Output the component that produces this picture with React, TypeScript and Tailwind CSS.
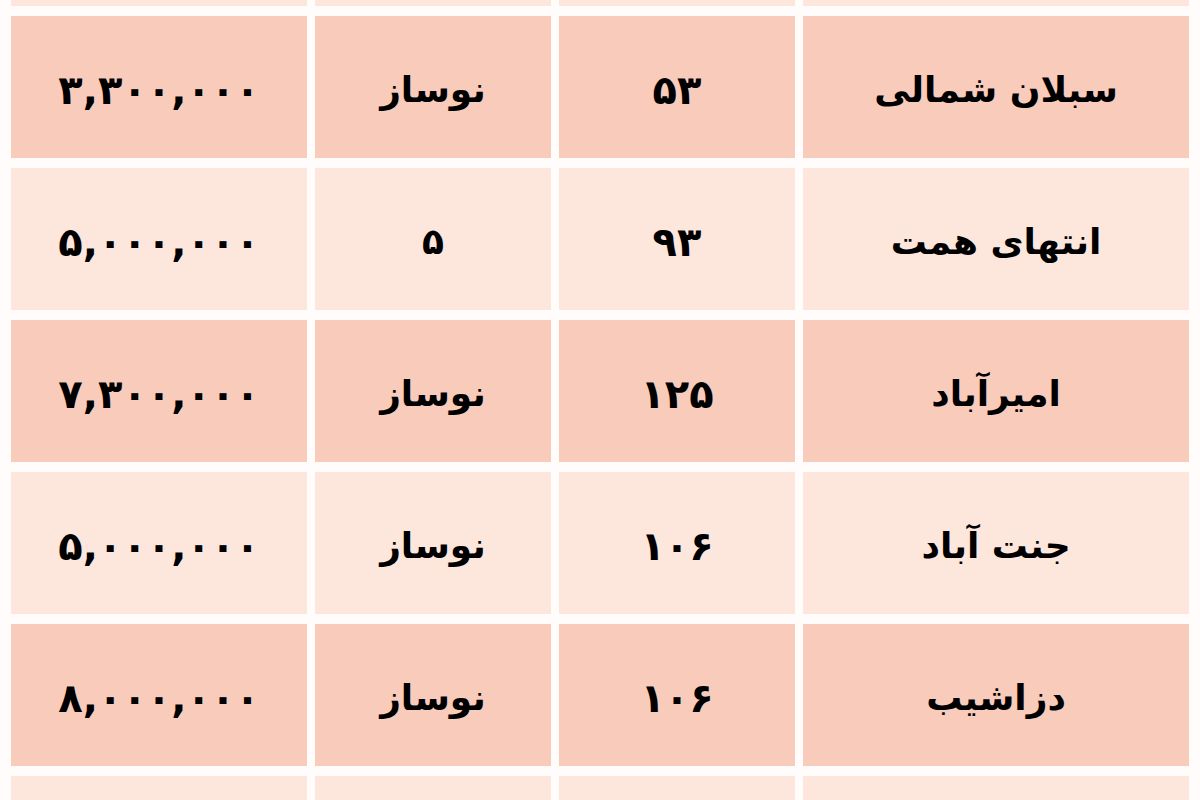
import React from "react";

type Row = { price: string; state: string; area: string; name: string; dark: boolean };

const rows: Row[] = [
  { price: "۳,۳۰۰,۰۰۰", state: "نوساز", area: "۵۳", name: "سبلان شمالی", dark: true },
  { price: "۵,۰۰۰,۰۰۰", state: "۵", area: "۹۳", name: "انتهای همت", dark: false },
  { price: "۷,۳۰۰,۰۰۰", state: "نوساز", area: "۱۲۵", name: "امیرآباد", dark: true },
  { price: "۵,۰۰۰,۰۰۰", state: "نوساز", area: "۱۰۶", name: "جنت آباد", dark: false },
  { price: "۸,۰۰۰,۰۰۰", state: "نوساز", area: "۱۰۶", name: "دزاشیب", dark: true },
];

function Cell({ text, dark, h, size = "text-[36px]" }: { text?: string; dark: boolean; h: string; size?: string }) {
  return (
    <div
      dir="rtl"
      className={`${h} ${size} flex items-center justify-center pt-[6px] ${dark ? "bg-[#f9cbbb]" : "bg-[#fde6dc]"} text-black font-bold [font-family:'DejaVu_Sans',sans-serif]`}
    >
      {text}
    </div>
  );
}

export default function App() {
  return (
    <div className="w-[1200px] h-[800px] overflow-hidden bg-[#fffcfb]">
      <div className="grid grid-cols-[296px_236px_236px_386px] gap-x-[8px] gap-y-[10px] pl-[11px] -mt-[2px]">
        <Cell dark={false} h="h-[8px]" />
        <Cell dark={false} h="h-[8px]" />
        <Cell dark={false} h="h-[8px]" />
        <Cell dark={false} h="h-[8px]" />
        {rows.map((r, i) => (
          <React.Fragment key={i}>
            <Cell text={r.price} dark={r.dark} h="h-[142px]" size="text-[40px]" />
            <Cell text={r.state} dark={r.dark} h="h-[142px]" />
            <Cell text={r.area} dark={r.dark} h="h-[142px]" size="text-[40px]" />
            <Cell text={r.name} dark={r.dark} h="h-[142px]" />
          </React.Fragment>
        ))}
        <Cell dark={false} h="h-[40px]" />
        <Cell dark={false} h="h-[40px]" />
        <Cell dark={false} h="h-[40px]" />
        <Cell dark={false} h="h-[40px]" />
      </div>
    </div>
  );
}
